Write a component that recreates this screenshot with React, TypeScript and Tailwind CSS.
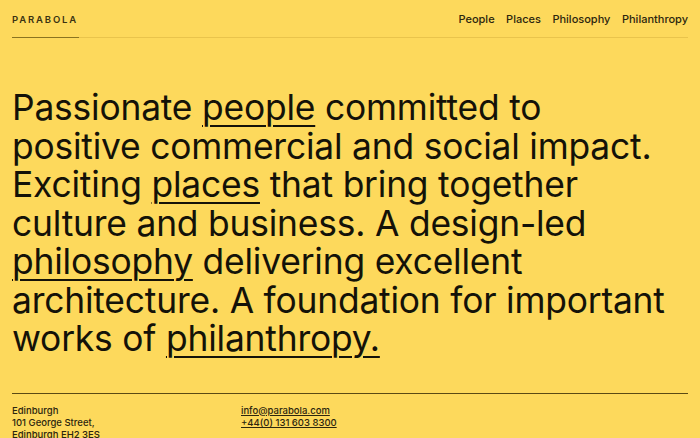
import React from 'react';

const navLinks = ['People', 'Places', 'Philosophy', 'Philanthropy'];

const Home = () => {
  const u = 'underline decoration-[2px] underline-offset-[5px]';

  return (
    <div className="min-h-screen bg-[#fdd95c] text-[#141208] px-3 font-['Inter',sans-serif] overflow-hidden h-[438px]">
      {/* Header */}
      <header className="flex items-start justify-between border-b border-[#e9c44c] h-[38px]">
        <div className="flex flex-col">
          <a className="text-[9.5px] font-semibold tracking-[1.85px] text-[#3a3212] pt-[14px] leading-[12px]">PARABOLA</a>
          <div className="mt-[11px] h-[1px] w-[67px] bg-[#8a7320]" />
        </div>
        <nav className="flex gap-[11.5px] pt-[12px] text-[11px] font-medium text-[#2c260e] leading-[14px]">
          {navLinks.map((l) => (
            <a key={l}>{l}</a>
          ))}
        </nav>
      </header>

      {/* Intro statement */}
      <section className="pt-[51px] pb-[34px]">
        <h1 className="text-[35.4px] leading-[38.5px] tracking-[-0.2px] font-normal">
          Passionate <a className={u}>people</a> committed to<br />
          positive commercial and social impact.<br />
          Exciting <a className={u}>places</a> that bring together<br />
          culture and business. A design-led<br />
          <a className={u}>philosophy</a> delivering excellent<br />
          architecture. A foundation for important<br />
          works of <a className={u}>philanthropy.</a>
        </h1>
      </section>

      {/* Footer */}
      <footer className="border-t border-[#5a4a14] pt-[11px] grid grid-cols-[229px_1fr] text-[9.5px] leading-[12px] font-medium text-[#2c260e]">
        <div>
          <p>Edinburgh</p>
          <p>101 George Street,</p>
          <p>Edinburgh EH2 3ES</p>
        </div>
        <div>
          <p><a className="underline underline-offset-[1px]">info@parabola.com</a></p>
          <p><a className="underline underline-offset-[1px]">+44(0) 131 603 8300</a></p>
        </div>
      </footer>
    </div>
  );
};

export default Home;
